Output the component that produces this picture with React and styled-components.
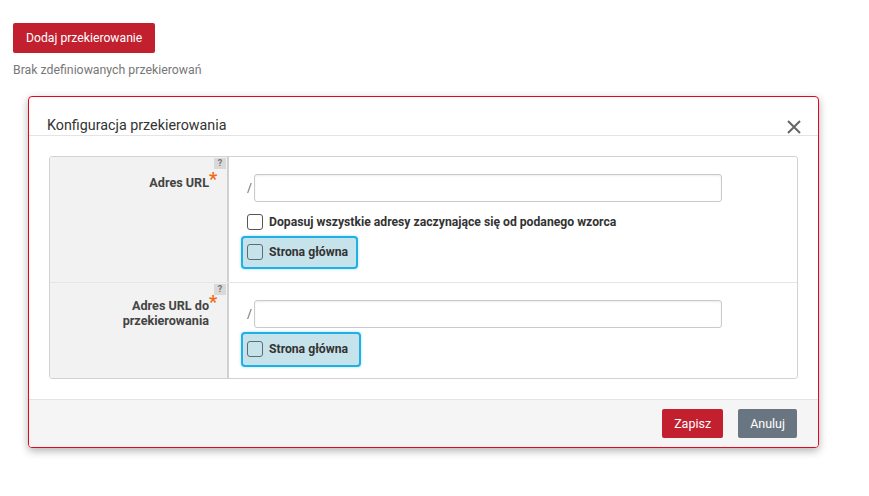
import React from "react";
import styled, {createGlobalStyle} from "styled-components";

const GlobalStyle = createGlobalStyle`
    body {
        margin: 0;
        background: #fff;
        font-family: Roboto, "Liberation Sans", Arial, sans-serif;
        color: #333;
    }
`

const Page = styled.div`
    padding: 23px 13px;
`

const Button = styled.button`
    font-family: Roboto, "Liberation Sans", Arial, sans-serif;
    font-size: ${(props) => props.small ? '12.5px' : '12.2px'};
    color: #fff;
    background: ${(props) => props.secondary ? '#6a7582' : '#c2202f'};
    border: none;
    border-radius: 2px;
    height: ${(props) => props.small ? '29px' : '30px'};
    padding: 0 ${(props) => props.small ? '12px' : '13px'};
    cursor: pointer;
`

const EmptyInfo = styled.div`
    font-size: 12.3px;
    color: #777;
    margin-top: 9px;
    line-height: 16px;
`

const Modal = styled.div`
    margin: 18px 0 0 15px;
    width: 789px;
    border: 1px solid #e2071f;
    border-radius: 4px;
    background: #fff;
    box-shadow: 0 3px 8px rgba(0, 0, 0, 0.3);
    overflow: hidden;
`

const ModalHeader = styled.div`
    display: flex;
    align-items: flex-end;
    justify-content: space-between;
    padding: 19px 17px 1px 18px;
    border-bottom: 1px solid #e4e4e4;
`

const Title = styled.h4`
    margin: 0;
    font-size: 14.3px;
    font-weight: 400;
    line-height: 18px;
    color: #333;
`

const CloseButton = styled.button`
    border: none;
    background: none;
    padding: 0;
    width: 14px;
    height: 14px;
    cursor: pointer;
    display: flex;
`

const ModalBody = styled.div`
    padding: 20px;
`

const FormTable = styled.div`
    border: 1px solid #d2d2d2;
    border-radius: 3px;
    overflow: hidden;
`

const FormRow = styled.div`
    display: flex;
    & + & {
        border-top: 1px solid #e6e6e6;
    }
`

const LabelCell = styled.div`
    position: relative;
    width: 179px;
    flex-shrink: 0;
    background: #f2f2f2;
    border-right: 2px solid #d0d0d0;
    padding: 15px 18px 0 0;
    box-sizing: border-box;
    text-align: right;
`

const Label = styled.label`
    display: inline-block;
    font-size: 12.6px;
    font-weight: 700;
    line-height: 15px;
    color: #444;
`

const Required = styled.span`
    color: #f26a10;
    font-size: 18px;
    position: absolute;
    margin-left: 0;
    margin-top: -4px;
`

const HelpBadge = styled.span`
    position: absolute;
    top: 1px;
    right: 1px;
    width: 12px;
    height: 11px;
    background: #d9d9d9;
    color: #777;
    font-size: 9px;
    font-weight: 700;
    line-height: 11px;
    text-align: center;
`

const FieldCell = styled.div`
    flex: 1;
    padding: 17px 16px ${(props) => props.bottom}px 12px;
`

const UrlRow = styled.div`
    display: flex;
    align-items: center;
    margin-left: 6px;
`

const Slash = styled.span`
    font-size: 12px;
    color: #666;
    width: 7px;
`

const Input = styled.input`
    width: 468px;
    height: 28px;
    box-sizing: border-box;
    border: 1px solid #cacaca;
    border-radius: 3px;
    box-shadow: inset 0 1px 2px rgba(0, 0, 0, 0.08);
    outline: none;
`

const CheckRow = styled.label`
    display: flex;
    align-items: center;
    gap: 6px;
    margin: 12px 0 0 6px;
    font-size: 12.2px;
    font-weight: 700;
    color: #333;
`

const HomeBox = styled.label`
    display: inline-flex;
    align-items: center;
    gap: 6px;
    margin-top: ${(props) => props.top}px;
    padding: ${(props) => props.tall ? '7px 11px 8px 4px' : '6px 8px 7px 4px'};
    border: 2px solid #1fb0e4;
    border-radius: 4px;
    background: #c6e3eb;
    box-shadow: 0 0 3px rgba(31, 176, 228, 0.4);
    font-size: 12.2px;
    font-weight: 700;
    color: #333;
`

const Box = styled.span`
    width: 16px;
    height: 16px;
    box-sizing: border-box;
    border: 1px solid ${(props) => props.light ? '#5f6b70' : '#555'};
    border-radius: 3px;
    background: ${(props) => props.light ? 'transparent' : '#fff'};
    flex-shrink: 0;
`

const ModalFooter = styled.div`
    display: flex;
    justify-content: flex-end;
    gap: 15px;
    padding: 9px 21px 9px;
    background: #f5f5f5;
    border-top: 1px solid #e4e4e4;
`

const CloseIcon = () => (
    <svg width="14" height="14" viewBox="0 0 14 14">
        <path d="M1 1L13 13M13 1L1 13" stroke="#666" strokeWidth="2" fill="none"/>
    </svg>
)

export default function App() {
    return (
        <Page>
            <GlobalStyle/>
            <Button>Dodaj przekierowanie</Button>
            <EmptyInfo>Brak zdefiniowanych przekierowań</EmptyInfo>
            <Modal>
                <ModalHeader>
                    <Title>Konfiguracja przekierowania</Title>
                    <CloseButton><CloseIcon/></CloseButton>
                </ModalHeader>
                <ModalBody>
                    <FormTable>
                        <FormRow>
                            <LabelCell>
                                <HelpBadge>?</HelpBadge>
                                <Label>Adres URL<Required>*</Required></Label>
                            </LabelCell>
                            <FieldCell bottom={13}>
                                <UrlRow>
                                    <Slash>/</Slash>
                                    <Input/>
                                </UrlRow>
                                <CheckRow>
                                    <Box/>
                                    Dopasuj wszystkie adresy zaczynające się od podanego wzorca
                                </CheckRow>
                                <HomeBox top={6}>
                                    <Box light/>
                                    Strona główna
                                </HomeBox>
                            </FieldCell>
                        </FormRow>
                        <FormRow>
                            <LabelCell>
                                <HelpBadge>?</HelpBadge>
                                <Label>Adres URL do<Required>*</Required><br/>przekierowania</Label>
                            </LabelCell>
                            <FieldCell bottom={11}>
                                <UrlRow>
                                    <Slash>/</Slash>
                                    <Input/>
                                </UrlRow>
                                <HomeBox top={4} tall>
                                    <Box light/>
                                    Strona główna
                                </HomeBox>
                            </FieldCell>
                        </FormRow>
                    </FormTable>
                </ModalBody>
                <ModalFooter>
                    <Button small>Zapisz</Button>
                    <Button small secondary>Anuluj</Button>
                </ModalFooter>
            </Modal>
        </Page>
    )
}
